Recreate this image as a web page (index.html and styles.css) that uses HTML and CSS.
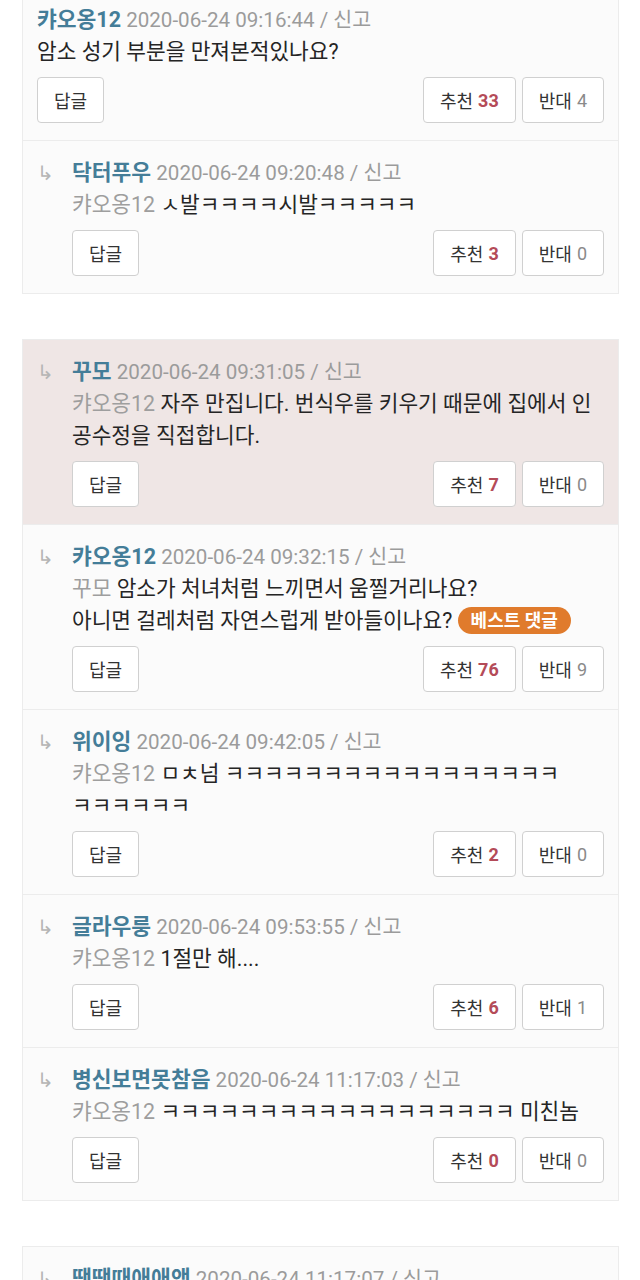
FILE: index.html
```html
<!DOCTYPE html>
<html lang="ko">
<head>
<meta charset="utf-8">
<title>댓글</title>
<link rel="stylesheet" href="styles.css">
</head>
<body>
<div class="thread cut">
  <div class="comment top">
    <div class="meta"><span class="name">캬오옹12</span> <span class="date">2020-06-24 09:16:44 / 신고</span></div>
    <div class="text">암소 성기 부분을 만져본적있나요?</div>
    <div class="actions">
      <button class="btn">답글</button>
      <button class="btn up push">추천 <b>33</b></button>
      <button class="btn down">반대 <span>4</span></button>
    </div>
  </div>
  <div class="comment reply">
    <div class="arrow">↳</div>
    <div class="main">
      <div class="meta"><span class="name">닥터푸우</span> <span class="date">2020-06-24 09:20:48 / 신고</span></div>
      <div class="text"><span class="mention">캬오옹12</span> ㅅ발ㅋㅋㅋㅋ시발ㅋㅋㅋㅋㅋ</div>
      <div class="actions">
        <button class="btn">답글</button>
        <button class="btn up push">추천 <b>3</b></button>
        <button class="btn down">반대 <span>0</span></button>
      </div>
    </div>
  </div>
</div>

<div class="thread">
  <div class="comment reply hl">
    <div class="arrow">↳</div>
    <div class="main">
      <div class="meta"><span class="name">꾸모</span> <span class="date">2020-06-24 09:31:05 / 신고</span></div>
      <div class="text"><span class="mention">캬오옹12</span> 자주 만집니다. 번식우를 키우기 때문에 집에서 인공수정을 직접합니다.</div>
      <div class="actions">
        <button class="btn">답글</button>
        <button class="btn up push">추천 <b>7</b></button>
        <button class="btn down">반대 <span>0</span></button>
      </div>
    </div>
  </div>
  <div class="comment reply">
    <div class="arrow">↳</div>
    <div class="main">
      <div class="meta"><span class="name">캬오옹12</span> <span class="date">2020-06-24 09:32:15 / 신고</span></div>
      <div class="text"><span class="mention">꾸모</span> 암소가 처녀처럼 느끼면서 움찔거리나요?<br>아니면 걸레처럼 자연스럽게 받아들이나요? <span class="best">베스트 댓글</span></div>
      <div class="actions">
        <button class="btn">답글</button>
        <button class="btn up push">추천 <b>76</b></button>
        <button class="btn down">반대 <span>9</span></button>
      </div>
    </div>
  </div>
  <div class="comment reply">
    <div class="arrow">↳</div>
    <div class="main">
      <div class="meta"><span class="name">위이잉</span> <span class="date">2020-06-24 09:42:05 / 신고</span></div>
      <div class="text"><span class="mention">캬오옹12</span> ㅁㅊ넘 ㅋㅋㅋㅋㅋㅋㅋㅋㅋㅋㅋㅋㅋㅋㅋㅋㅋ<br>ㅋㅋㅋㅋㅋㅋ</div>
      <div class="actions">
        <button class="btn">답글</button>
        <button class="btn up push">추천 <b>2</b></button>
        <button class="btn down">반대 <span>0</span></button>
      </div>
    </div>
  </div>
  <div class="comment reply">
    <div class="arrow">↳</div>
    <div class="main">
      <div class="meta"><span class="name">글라우룽</span> <span class="date">2020-06-24 09:53:55 / 신고</span></div>
      <div class="text"><span class="mention">캬오옹12</span> 1절만 해....</div>
      <div class="actions">
        <button class="btn">답글</button>
        <button class="btn up push">추천 <b>6</b></button>
        <button class="btn down">반대 <span>1</span></button>
      </div>
    </div>
  </div>
  <div class="comment reply">
    <div class="arrow">↳</div>
    <div class="main">
      <div class="meta"><span class="name">병신보면못참음</span> <span class="date">2020-06-24 11:17:03 / 신고</span></div>
      <div class="text"><span class="mention">캬오옹12</span> ㅋㅋㅋㅋㅋㅋㅋㅋㅋㅋㅋㅋㅋㅋㅋㅋㅋㅋ 미친놈</div>
      <div class="actions">
        <button class="btn">답글</button>
        <button class="btn up push">추천 <b>0</b></button>
        <button class="btn down">반대 <span>0</span></button>
      </div>
    </div>
  </div>
</div>

<div class="thread">
  <div class="comment reply">
    <div class="arrow">↳</div>
    <div class="main">
      <div class="meta"><span class="name">땡땡때애애앵</span> <span class="date">2020-06-24 11:17:07 / 신고</span></div>
      <div class="text"><span class="mention">캬오옹12</span> ㅋㅋㅋㅋㅋ</div>
    </div>
  </div>
</div>
</body>
</html>
```
FILE: styles.css
```css
html, body {
  margin: 0;
  padding: 0;
  background: #ffffff;
}
body {
  font-family: Roboto, "Noto Sans CJK KR", sans-serif;
  color: #2a2a2a;
}
.thread {
  margin: 0 21px 45px 22px;
  border: 1px solid #ececec;
  background: #fbfbfb;
}
.thread.cut {
  border-top: none;
}
.comment {
  padding: 16px 14px 17px 14px;
  border-top: 1px solid #ececec;
}
.comment:first-child {
  border-top: none;
}
.comment.top {
  padding-top: 4px;
}
.comment.hl {
  background: #efe6e5;
}
.reply {
  display: grid;
  grid-template-columns: 35px 1fr;
}
.arrow {
  font-size: 20px;
  line-height: 32px;
  color: #b5b5b5;
}
.meta {
  font-size: 20.6px;
  line-height: 32px;
  white-space: nowrap;
}
.name {
  font-weight: 700;
  font-size: 21.5px;
  color: #447d98;
}
.date {
  color: #9b9b9b;
}
.text {
  font-size: 21.4px;
  line-height: 32px;
  color: #252525;
}
.mention {
  color: #9e9e9e;
}
.best {
  display: inline-block;
  background: #e07b2c;
  color: #fff;
  font-size: 18px;
  font-weight: 700;
  line-height: 27px;
  padding: 0 13px;
  border-radius: 14px;
  vertical-align: 1px;
}
.actions {
  display: flex;
  gap: 6px;
  margin-top: 9px;
}
.btn {
  height: 46px;
  padding: 0 16px;
  border: 1px solid #d0d0d0;
  border-radius: 4px;
  background: #ffffff;
  font-family: Roboto, "Noto Sans CJK KR", sans-serif;
  font-size: 18px;
  color: #333333;
  display: flex;
  align-items: center;
  gap: 5px;
}
.push {
  margin-left: auto;
}
.up b {
  color: #b44b58;
  font-weight: 700;
}
.down span {
  color: #8a8a8a;
}
```
